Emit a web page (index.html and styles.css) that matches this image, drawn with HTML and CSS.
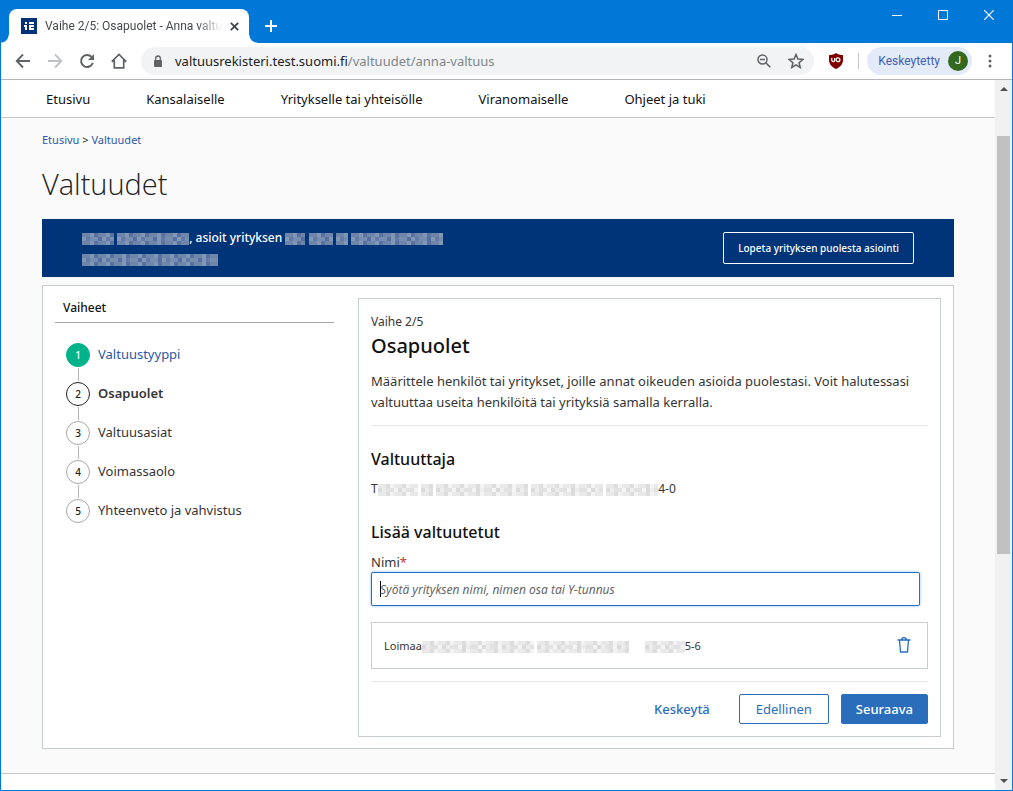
FILE: index.html
```
<!DOCTYPE html>
<html lang="fi">
<head>
<meta charset="utf-8">
<title>Vaihe 2/5: Osapuolet - Anna valtuus</title>
<link rel="stylesheet" href="styles.css">
</head>
<body>
<div class="window">
  <header class="titlebar">
    <div class="tab">
      <svg class="favicon" width="16" height="16" viewBox="0 0 16 16" aria-hidden="true"><rect width="16" height="16" fill="#003479"/><path d="M4 4h2v2H4zM3 7h3v5H4V9H3zM8 4h5v2H8zM8 7h5v2h-3v1h3v2H8z" fill="#fff"/></svg>
      <span class="tab-title">Vaihe 2/5: Osapuolet - Anna valtu</span>
      <button class="icon-btn" type="button" aria-label="Sulje välilehti"><svg width="9" height="9" viewBox="0 0 9 9"><path d="M.8.8l7.4 7.4M8.200.8L.8 8.200" stroke="#3c4043" stroke-width="1.700"/></svg></button>
    </div>
    <button class="icon-btn new-tab" type="button" aria-label="Uusi välilehti"><svg width="12" height="12" viewBox="0 0 12 12"><path d="M6 0v12M0 6h12" stroke="#fff" stroke-width="2"/></svg></button>
    <div class="window-controls">
      <button class="icon-btn" type="button" aria-label="Pienennä"><svg width="10" height="10" viewBox="0 0 10 10"><path d="M0 5.500h10" stroke="#fff"/></svg></button>
      <button class="icon-btn" type="button" aria-label="Suurenna"><svg width="10" height="10" viewBox="0 0 10 10"><path d="M.5.5h9v9h-9z" fill="none" stroke="#fff"/></svg></button>
      <button class="icon-btn" type="button" aria-label="Sulje"><svg width="10" height="10" viewBox="0 0 10 10"><path d="M0 0l10 10M10 0L0 10" stroke="#fff" stroke-width="1.200"/></svg></button>
    </div>
  </header>

  <div class="toolbar">
    <div class="nav-buttons">
      <button class="icon-btn" type="button" aria-label="Takaisin"><svg width="16" height="16" viewBox="0 0 16 16"><path d="M15 8H2M8 1.500L1.700 8 8 14.500" fill="none" stroke="#5f6368" stroke-width="1.800"/></svg></button>
      <button class="icon-btn" type="button" aria-label="Eteenpäin"><svg width="16" height="16" viewBox="0 0 16 16"><path d="M1 8h13M8 1.500L14.300 8 8 14.500" fill="none" stroke="#bdc1c6" stroke-width="1.800"/></svg></button>
      <button class="icon-btn" type="button" aria-label="Päivitä"><svg width="16" height="16" viewBox="0 0 16 16"><path d="M13.800 9.800A6 6 0 1 1 12.500 3.900" fill="none" stroke="#5f6368" stroke-width="2"/><path d="M15 1v6H9z" fill="#5f6368"/></svg></button>
      <button class="icon-btn" type="button" aria-label="Koti"><svg width="16" height="16" viewBox="0 0 16 16"><path d="M.8 8.700L8 1.500l7.200 7.200M3.300 7v7.800h9.400V7M.8 8.500h2.500M12.700 8.500h2.500" fill="none" stroke="#5f6368" stroke-width="1.700"/></svg></button>
    </div>
    <div class="address">
      <svg width="10" height="13" viewBox="0 0 10 13" aria-hidden="true"><rect x="1" y="5" width="8" height="7" rx="1" fill="#5f6368"/><path d="M2.700 5V3.300a2.300 2.300 0 0 1 4.600 0V5" fill="none" stroke="#5f6368" stroke-width="1.300"/></svg>
      <span class="url">valtuusrekisteri.test.suomi.fi<span class="url-path">/valtuudet/anna-valtuus</span></span>
      <button class="icon-btn" type="button" aria-label="Zoomaus"><svg width="14" height="14" viewBox="0 0 14 14"><circle cx="5.500" cy="5.500" r="4.500" fill="none" stroke="#5f6368" stroke-width="1.500"/><path d="M3 5.500h5M9 9l4.300 4.300" stroke="#5f6368" stroke-width="1.600"/></svg></button>
      <button class="icon-btn" type="button" aria-label="Lisää kirjanmerkki"><svg width="16" height="16" viewBox="0 0 16 16"><path d="M8 1.500l1.900 4.600 4.900.4-3.700 3.200 1.100 4.800L8 11.900l-4.200 2.600 1.100-4.800L1.200 6.500l4.900-.4z" fill="none" stroke="#5f6368" stroke-width="1.500"/></svg></button>
    </div>
    <svg class="shield" width="16" height="16" viewBox="0 0 16 16" aria-hidden="true"><path d="M8 0c2 1.500 4 2 7 2v5c0 4-2.500 7-7 9-4.500-2-7-5-7-9V2c3 0 5-.5 7-2z" fill="#800000"/><path d="M3.700 5v2q0 1.500 1.500 1.500T6.700 7V5" fill="none" stroke="#fff" stroke-width="1.300"/><circle cx="10" cy="6.800" r="1.900" fill="none" stroke="#fff" stroke-width="1.300"/></svg>
    <span class="divider"></span>
    <button class="profile" type="button">Keskeytetty <span class="avatar">J</span></button>
    <button class="icon-btn menu-btn" type="button" aria-label="Valikko"><svg width="4" height="14" viewBox="0 0 4 14"><g fill="#5f6368"><circle cx="2" cy="2" r="1.500"/><circle cx="2" cy="7" r="1.500"/><circle cx="2" cy="12" r="1.500"/></g></svg></button>
  </div>

  <div class="viewport">
    <div class="page">
      <nav class="site-nav">
        <a href="#">Etusivu</a><a href="#">Kansalaiselle</a><a href="#">Yritykselle tai yhteisölle</a><a href="#">Viranomaiselle</a><a href="#">Ohjeet ja tuki</a>
      </nav>
      <main class="content">
        <div class="breadcrumb"><a href="#">Etusivu</a> &gt; <a href="#">Valtuudet</a></div>
        <h1>Valtuudet</h1>

        <section class="banner">
          <p><span class="mosaic w32"></span> <span class="mosaic w72"></span>, asioit yrityksen <span class="mosaic w20"></span> <span class="mosaic w24"></span> <span class="mosaic w12"></span> <span class="mosaic w92"></span><br><span class="mosaic w136"></span></p>
          <button class="btn-ghost" type="button">Lopeta yrityksen puolesta asiointi</button>
        </section>

        <div class="card">
          <aside class="steps">
            <h2>Vaiheet</h2>
            <ol>
              <li class="done"><span class="num">1</span><a href="#">Valtuustyyppi</a></li>
              <li class="current"><span class="num">2</span><span>Osapuolet</span></li>
              <li><span class="num">3</span><span>Valtuusasiat</span></li>
              <li><span class="num">4</span><span>Voimassaolo</span></li>
              <li><span class="num">5</span><span>Yhteenveto ja vahvistus</span></li>
            </ol>
          </aside>

          <form class="panel">
            <p class="step-count">Vaihe 2/5</p>
            <h2>Osapuolet</h2>
            <p class="intro">Määrittele henkilöt tai yritykset, joille annat oikeuden asioida puolestasi. Voit halutessasi valtuuttaa useita henkilöitä tai yrityksiä samalla kerralla.</p>
            <hr>
            <h3>Valtuuttaja</h3>
            <p class="grantor">T<span class="mosaic w40"></span> <span class="mosaic w12"></span> <span class="mosaic w92"></span> <span class="mosaic w72"></span> <span class="mosaic w52"></span>4-0</p>
            <h3>Lisää valtuutetut</h3>
            <label for="name">Nimi<span class="required">*</span></label>
            <input id="name" type="text" placeholder="Syötä yrityksen nimi, nimen osa tai Y-tunnus">
            <div class="grantee">
              <span>Loimaa<span class="mosaic w112"></span> <span class="mosaic w92"></span></span>
              <span class="grantee-id"><span class="mosaic w40"></span>5-6</span>
              <button class="icon-btn" type="button" aria-label="Poista"><svg width="14" height="18" viewBox="0 0 14 18"><path d="M.5 3h13M4.500 3q0-2.300 2.500-2.300T9.500 3M2.500 3l1 12h7l1-12" fill="none" stroke="#2a6ebb" stroke-width="1.300"/></svg></button>
            </div>
            <hr>
            <div class="actions">
              <button class="btn-text" type="button">Keskeytä</button>
              <button class="btn-outline" type="button">Edellinen</button>
              <button class="btn-primary" type="submit">Seuraava</button>
            </div>
          </form>
        </div>
      </main>
      <footer class="site-footer"></footer>
    </div>
    <div class="scrollbar" aria-hidden="true">
      <svg width="8" height="4" viewBox="0 0 8 4"><path d="M0 4l4-4 4 4z" fill="#505050"/></svg>
      <span class="thumb"></span>
      <svg width="8" height="4" viewBox="0 0 8 4"><path d="M0 0h8L4 4z" fill="#505050"/></svg>
    </div>
  </div>
</div>
</body>
</html>
```
FILE: styles.css
```
* { box-sizing: border-box; }
body {
  margin: 0;
  font: 13px/20px "Noto Sans", sans-serif;
  color: #353535;
}
h1, h2, h3, p, ol { margin: 0; padding: 0; }
a { color: #2a59a8; text-decoration: none; }
button, input { font: inherit; }
button { cursor: pointer; white-space: nowrap; }
svg { display: block; flex: none; }
.icon-btn { display: block; padding: 0; border: 0; background: none; }

.window {
  min-height: 100vh;
  display: flex;
  flex-direction: column;
  border: 1px solid #0078d7;
  border-top: 0;
}
.titlebar {
  height: 43px;
  display: flex;
  align-items: flex-end;
  padding-left: 8px;
  background: #0078d7;
}
.tab {
  position: relative;
  width: 240px;
  height: 34px;
  display: flex;
  align-items: center;
  gap: 8px;
  padding: 0 12px;
  border-radius: 8px 8px 0 0;
  background: #fff;
}
.tab::before,
.tab::after {
  content: "";
  position: absolute;
  bottom: 0;
  width: 8px;
  height: 8px;
}
.tab::before { left: -8px; background: radial-gradient(circle at 0 0, transparent 7px, #fff 8px); }
.tab::after { right: -8px; background: radial-gradient(circle at 100% 0, transparent 7px, #fff 8px); }
.tab-title {
  flex: 1;
  white-space: nowrap;
  font: 12px/20px Roboto, sans-serif;
  color: #45494d;
  mask-image: linear-gradient(to right, #000 86%, transparent);
}
.new-tab { margin: 0 0 11px 16px; }
.window-controls {
  display: flex;
  gap: 36px;
  margin: 0 18px 0 auto;
  align-self: flex-start;
  padding-top: 10px;
}

.toolbar {
  height: 37px;
  display: flex;
  align-items: center;
  border-bottom: 1px solid #b6b4b6;
  padding: 0 20px 0 14px;
  background: #fff;
}
.nav-buttons { display: flex; gap: 16px; margin-right: 14px; }
.address {
  flex: 1;
  height: 28px;
  display: flex;
  align-items: center;
  gap: 17px;
  padding: 0 10px 0 12px;
  border-radius: 14px;
  background: #f1f3f4;
}
.url { flex: 1; margin-left: -5px; color: #202124; }
.url-path { color: #80868b; }
.shield { margin-left: 14px; }
.divider { width: 1px; height: 16px; margin: 0 8px 0 14px; background: #c6c9cc; }
.profile {
  height: 28px;
  display: flex;
  align-items: center;
  gap: 8px;
  padding: 0 4px 0 11px;
  border: 0;
  border-radius: 14px;
  background: #e3ebf8;
  color: #3f5fb5;
  font: 12px/20px Roboto, sans-serif;
}
.avatar {
  width: 20px;
  height: 20px;
  border-radius: 50%;
  background: #33691e;
  color: #fff;
  font-size: 11px;
}
.menu-btn { margin-left: 16px; }

.viewport { flex: 1; display: flex; }
.page { flex: 1; display: flex; flex-direction: column; background: #fafafa; }
.site-nav {
  height: 38px;
  display: flex;
  align-items: center;
  gap: 56px;
  padding: 0 45px;
  border-bottom: 1px solid #c8c8c8;
  background: #fff;
}
.site-nav a { color: #111; white-space: nowrap; }
.content { padding: 12px 41px 24px; }
.breadcrumb { font-size: 11px; color: #222; }
h1 {
  margin: 14px 0 15px;
  font: 300 29px/40px "Open Sans", sans-serif;
  color: #222;
}
.banner {
  min-height: 58px;
  display: flex;
  align-items: center;
  justify-content: space-between;
  padding: 0 40px;
  background: #003479;
  color: #fff;
  font-size: 12px;
  font-weight: 500;
  line-height: 21px;
}
.btn-ghost {
  height: 32px;
  padding: 0 14px;
  border: 1px solid #fff;
  border-radius: 2px;
  background: none;
  color: #fff;
  font-size: 10px;
  font-weight: 500;
}
.mosaic {
  display: inline-block;
  height: 12px;
  vertical-align: -3px;
  opacity: .6;
  background:
    repeating-linear-gradient(90deg, #d9d9df 0 4px, #a5abc4 4px 8px, #c7c8d3 8px 16px, #8f97b7 16px 20px) 0 4px / 100% 4px no-repeat,
    repeating-linear-gradient(90deg, #b9bccb 0 8px, #d9d9df 8px 12px, #959cba 12px 16px) 0 0 / 100% 12px no-repeat;
}
.w12 { width: 12px; }
.w20 { width: 20px; }
.w24 { width: 24px; }
.w32 { width: 32px; }
.w40 { width: 40px; }
.w52 { width: 52px; }
.w72 { width: 72px; }
.w92 { width: 92px; }
.w112 { width: 112px; }
.w136 { width: 136px; }
.panel .mosaic {
  background:
    repeating-linear-gradient(90deg, #c4c4c4 0 4px, #e2e2e2 4px 8px, #cfcfcf 8px 16px, #eee 16px 20px) 0 4px / 100% 4px no-repeat,
    repeating-linear-gradient(90deg, #dcdcdc 0 8px, #c8c8c8 8px 12px, #ececec 12px 16px) 0 0 / 100% 12px no-repeat;
}

.card {
  display: flex;
  gap: 24px;
  margin-top: 8px;
  padding: 12px 12px 11px;
  border: 1px solid #c8cdd0;
  background: #fff;
}
.steps { flex: 0 0 279px; }
.steps h2 {
  padding: 0 8px 5px;
  border-bottom: 1px solid #a5a5a5;
  font-size: 12px;
  line-height: 19px;
  font-weight: 500;
  color: #111;
}
.steps h2 + ol { margin-top: 20px; }
.steps ol { list-style: none; padding-left: 11px; }
.steps li { position: relative; display: flex; gap: 8px; padding-bottom: 15px; line-height: 22px; }
.steps li:not(:last-child)::after {
  content: "";
  position: absolute;
  left: 12px;
  bottom: 1px;
  width: 1px;
  height: 13px;
  background: #b5b5b5;
}
.num {
  width: 24px;
  height: 24px;
  border: 1px solid #a8a8a8;
  border-radius: 50%;
  text-align: center;
  font-size: 10px;
  font-weight: 500;
  color: #222;
}
.done .num { border-color: #00b38a; background: #00b38a; color: #fff; }
.current { font-weight: 600; }
.current .num { border-color: #222; }

.panel {
  flex: 1;
  min-width: 0;
  padding: 13px 12px 12px;
  border: 1px solid #c8cdd0;
}
.step-count { font-size: 12px; }
.panel h2 { font-size: 20px; line-height: 28px; font-weight: 500; color: #111; }
.panel h3 { margin-top: 21px; font-size: 16px; line-height: 24px; font-weight: 500; color: #111; }
.intro { margin-top: 11px; line-height: 21px; }
hr { margin: 12px 0 0; border: 0; border-top: 1px solid #e8e8e8; }
.grantor { margin-top: 8px; font-size: 12px; }
label { display: block; margin-top: 8px; }
.required { color: #c13832; }
.panel input {
  display: block;
  width: calc(100% - 8px);
  height: 34px;
  padding: 0 8px;
  border: 1px solid #2a6ebb;
  border-radius: 2px;
  outline: 0;
  background: linear-gradient(#000, #000) 8px center / 1px 16px no-repeat #fff;
  box-shadow: 0 0 3px #86bdf5;
  font-size: 12px;
}
.panel input::placeholder { color: #666; font-style: italic; }
.grantee {
  display: flex;
  align-items: center;
  gap: 16px;
  min-height: 47px;
  margin-top: 16px;
  padding: 0 16px 0 12px;
  border: 1px solid #c8cdd0;
  font-size: 11px;
}
.grantee-id { flex: 1; }
.actions { display: flex; justify-content: flex-end; gap: 12px; margin-top: 12px; }
.actions button { height: 30px; padding: 0 16px; border: 1px solid #2a6ebb; border-radius: 2px; line-height: 20px; }
.actions .btn-text { border-color: transparent; background: none; color: #2a6ebb; font-weight: 500; }
.btn-outline { background: #fff; color: #2a6ebb; }
.actions .btn-primary { padding: 0 14px; background: #2a6ebb; color: #fff; font-weight: 500; }
.site-footer { flex: 1; border-top: 1px solid #c8c8c8; background: #fff; }

.scrollbar {
  width: 17px;
  display: flex;
  flex-direction: column;
  align-items: center;
  padding: 7px 2px;
  background: #f1f1f1;
}
.thumb { width: 13px; height: 60%; margin: 45px 0 auto; background: #c1c1c1; }
```
